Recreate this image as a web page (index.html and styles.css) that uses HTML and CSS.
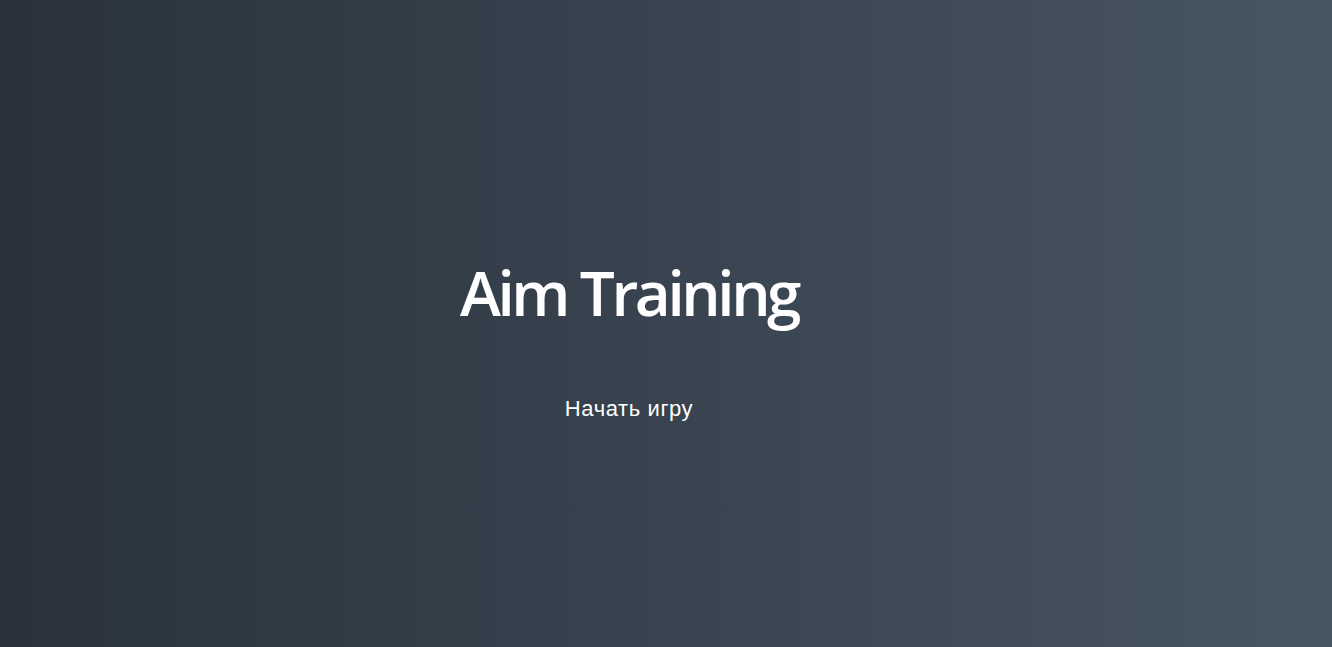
FILE: index.html
```html
<!DOCTYPE html>
<html lang="ru">
<head>
<meta charset="utf-8">
<title>Aim Training</title>
<link rel="stylesheet" href="styles.css">
</head>
<body>
<main class="screen">
  <h1 class="title">Aim Training</h1>
  <button class="start">Начать игру</button>
</main>
</body>
</html>
```
FILE: styles.css
```css
html, body {
  margin: 0;
  padding: 0;
  height: 100%;
}
body {
  background: linear-gradient(90deg, #29323c, #485563);
  color: #fff;
  font-family: "Open Sans", sans-serif;
}
.screen {
  box-sizing: border-box;
  height: 100%;
  padding: 38px 74px 0 0;
  display: flex;
  flex-direction: column;
  align-items: center;
  justify-content: center;
}
.title {
  margin: 0;
  font-size: 62px;
  font-weight: 600;
  letter-spacing: -3.4px;
  line-height: 1.2;
}
.start {
  margin-top: 58px;
  background: transparent;
  border: none;
  color: #fff;
  font-family: "Liberation Sans", Arial, sans-serif;
  font-size: 22px;
  letter-spacing: 0.6px;
  padding: 8px 16px;
}
```
